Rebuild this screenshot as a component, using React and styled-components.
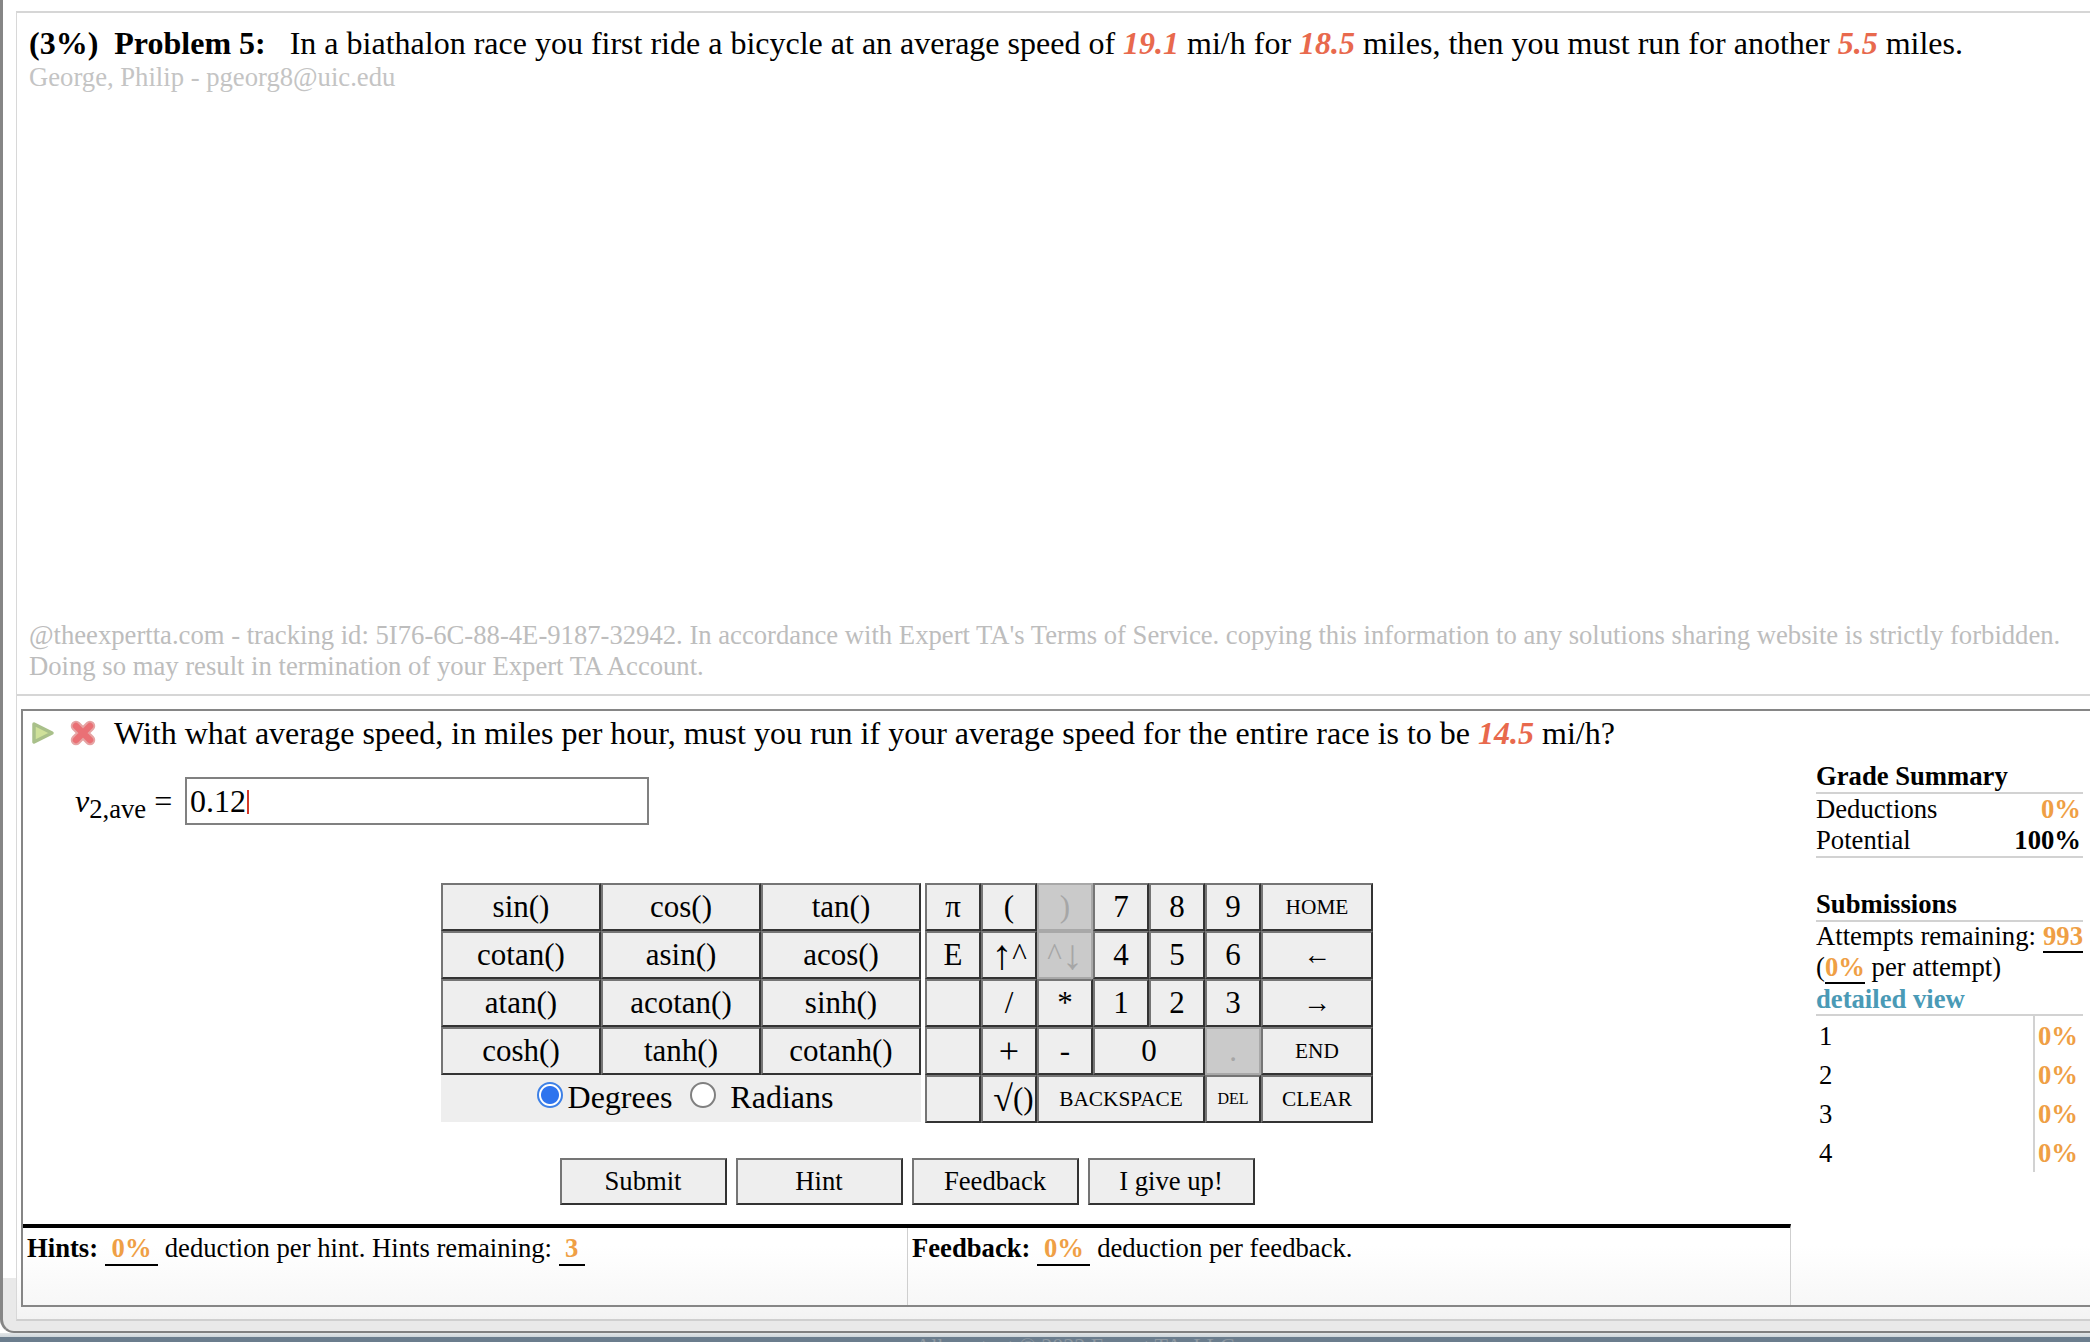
import React from "react";
import styled, { createGlobalStyle } from "styled-components";

const Global = createGlobalStyle`
  html, body { margin: 0; padding: 0; background: #fff; }
  body { font-family: "Liberation Serif", "Times New Roman", serif; color: #000; }
`;

const Page = styled.div`
  width: 2090px;
  height: 1342px;
  overflow: hidden;
  display: flex;
  flex-direction: column;
`;

const Win = styled.div`
  flex: none;
  height: 1333px;
  box-sizing: border-box;
  border-left: 3px solid #868686;
  border-bottom: 2px solid #808080;
  border-bottom-left-radius: 14px;
  padding: 11px 0 10px 13px;
  background: linear-gradient(#fff 96%, #e9e9e9 96%);
  display: flex;
`;

const Frame = styled.div`
  flex: 1;
  min-width: 0;
  box-sizing: border-box;
  border-top: 2px solid #d6d6d6;
  border-left: 1px solid #d8d8d8;
  border-bottom: 2px solid #cfcfcf;
  display: flex;
  flex-direction: column;
  background: linear-gradient(#fff 96%, #f3f3f3);
`;

const Statement = styled.section`
  flex: none;
  height: 683px;
  box-sizing: border-box;
  padding: 12px 0 12px 12px;
  border-bottom: 2px solid #d6d6d6;
  display: flex;
  flex-direction: column;
`;

const Lead = styled.p`
  margin: 0 0 1px;
  font-size: 32px;
  line-height: 36px;
  white-space: nowrap;
`;

const Var = styled.b`
  font-style: italic;
  color: #e8694d;
`;

const Owner = styled.div`
  font-size: 26.67px;
  line-height: 30px;
  color: #c4c4c4;
`;

const Legal = styled.div`
  margin-top: auto;
  font-size: 26.67px;
  line-height: 31px;
  color: #bdbdbd;
  white-space: nowrap;
`;

const Question = styled.section`
  flex: none;
  margin: 13px 0 0 4px;
  height: 598px;
  box-sizing: border-box;
  border-top: 2px solid #868686;
  border-left: 2px solid #868686;
  border-bottom: 2px solid #868686;
  background: linear-gradient(#fff 90%, #f7f7f7);
  display: flex;
`;

const Main = styled.div`
  width: 1768px;
  flex: none;
  display: flex;
  flex-direction: column;
`;

const Prompt = styled.div`
  height: 44px;
  padding-left: 8px;
  display: flex;
  align-items: center;
  font-size: 32px;
  white-space: nowrap;
`;

const IconSlot = styled.span`
  display: inline-flex;
  margin-right: ${(p) => p.$gap}px;
`;

const AnswerRow = styled.div`
  margin: 22px 0 0 52px;
  height: 48px;
  display: flex;
  align-items: center;
`;

const AnswerLabel = styled.div`
  width: 110px;
  flex: none;
  font-size: 32px;
  white-space: nowrap;
  em { font-size: 32px; }
  sub { font-size: 26.67px; line-height: 0; vertical-align: -6px; }
`;

const AnswerBox = styled.div`
  width: 464px;
  height: 48px;
  box-sizing: border-box;
  border: 2px solid #808080;
  padding-left: 3px;
  display: flex;
  align-items: center;
  font-size: 32px;
`;

const Caret = styled.span`
  display: inline-block;
  width: 2px;
  height: 24px;
  background: #d43a2a;
  margin-left: 1px;
  margin-top: 2px;
`;

const Calculator = styled.div`
  margin-top: 58px;
  display: flex;
  justify-content: center;
  gap: 4px;
`;

const FnColumn = styled.div`
  width: 480px;
  display: flex;
  flex-direction: column;
`;

const FnGrid = styled.div`
  display: grid;
  grid-template-columns: repeat(3, 160px);
  grid-auto-rows: 48px;
`;

const KeyGrid = styled.div`
  display: grid;
  grid-template-columns: repeat(6, 56px) 112px;
  grid-auto-rows: 48px;
`;

const Key = styled.div`
  box-sizing: border-box;
  grid-column: span ${(p) => p.$span || 1};
  border: 2px solid;
  border-color: ${(p) => (p.$off ? "#a8a8a8" : "#757575 #333 #333 #757575")};
  background: ${(p) => (p.$off ? "#cacaca" : "#eeeeee")};
  color: ${(p) => (p.$off ? "#a6a6a6" : "#000")};
  font-size: ${(p) => p.$size || 31}px;
  padding-left: ${(p) => p.$shift || 0}px;
  display: flex;
  align-items: center;
  justify-content: center;
  white-space: nowrap;
`;

const BigGlyph = styled.span`
  font-size: ${(p) => p.$size}px;
  line-height: 0;
`;

const AngleRow = styled.div`
  height: 47px;
  box-sizing: border-box;
  padding: 0 0 3px 8px;
  background: #eeeeee;
  display: flex;
  align-items: center;
  justify-content: center;
  font-size: 32px;
`;

const Radio = styled.input`
  appearance: none;
  flex: none;
  width: 26px;
  height: 26px;
  margin: 0 ${(p) => p.$after}px 5px ${(p) => p.$before}px;
  box-sizing: border-box;
  border-radius: 50%;
  border: 2px solid ${(p) => (p.$on ? "#3d80e6" : "#808080")};
  background: ${(p) =>
    p.$on ? "radial-gradient(circle, #2f74ee 0 8.5px, #fff 9.5px)" : "#fff"};
`;

const Actions = styled.div`
  margin-top: 35px;
  display: flex;
  justify-content: center;
  gap: 9px;
`;

const Action = styled.div`
  width: 167px;
  height: 47px;
  box-sizing: border-box;
  border: 2px solid;
  border-color: #757575 #333 #333 #757575;
  background: #eeeeee;
  font-size: 26.67px;
  display: flex;
  align-items: center;
  justify-content: center;
`;

const HelpRow = styled.div`
  margin-top: 19px;
  flex: 1;
  border-top: 4px solid #000;
  border-right: 1px solid #cfcfcf;
  display: grid;
  grid-template-columns: 884px 1fr;
`;

const HelpCell = styled.div`
  padding: 4px 0 0 ${(p) => p.$pad}px;
  font-size: 26.67px;
  line-height: 32px;
  white-space: nowrap;
  & + & { border-left: 1px solid #cfcfcf; }
  b { margin-right: 7px; }
`;

const Blank = styled.span`
  display: inline-block;
  min-width: ${(p) => p.$w}px;
  box-sizing: border-box;
  text-align: ${(p) => p.$align || "center"};
  font-weight: 700;
  color: #ef9f45;
  border-bottom: 2px solid #000;
  line-height: ${(p) => p.$lh || 32}px;
`;

const Side = styled.aside`
  margin: 50px 7px 0 25px;
  flex: 1;
  font-size: 26.67px;
  line-height: 31px;
`;

const SideTitle = styled.div`
  font-weight: 700;
  border-bottom: 2px solid #d2d2d2;
  line-height: 31px;
  margin-top: ${(p) => p.$top || 0}px;
`;

const SideRow = styled.div`
  display: flex;
  justify-content: space-between;
  padding-right: 2px;
  b { color: ${(p) => (p.$accent ? "#ef9f45" : "#000")}; }
`;

const AttemptsLine = styled.div`
  display: flex;
  justify-content: space-between;
  line-height: 29px;
  white-space: nowrap;
`;

const PerAttempt = styled.div`
  line-height: 29px;
  white-space: nowrap;
`;

const Rule = styled.div`
  border-bottom: 2px solid #d2d2d2;
`;

const Detail = styled.div`
  font-weight: 700;
  color: #4a9ab6;
  line-height: 30px;
  border-bottom: 2px solid #d2d2d2;
`;

const AttemptRow = styled.div`
  display: grid;
  grid-template-columns: 217px 1fr;
  height: 39px;
  align-items: center;
`;

const AttemptNo = styled.span`
  padding: 2px 0 0 3px;
  box-sizing: border-box;
  height: 100%;
  display: flex;
  align-items: center;
`;

const AttemptPct = styled.b`
  color: #ef9f45;
  box-sizing: border-box;
  height: 100%;
  display: flex;
  align-items: center;
  padding: 2px 0 0 3px;
  border-left: 2px solid #d2d2d2;
`;

const StatusBar = styled.div`
  flex: 1;
  overflow: hidden;
  background: linear-gradient(#e3e6e8 0, #cdd4d9 4px, #6b7d8d 4px);
  text-align: center;
  font-size: 22px;
  line-height: 26px;
  color: #8f9aa3;
  padding-left: 60px;
`;

const PlayIcon = () => (
  <svg width="24" height="24" viewBox="0 0 24 24">
    <path d="M3 3 L21 12 L3 21 Z" fill="#cfe19a" stroke="#a9c08a" strokeWidth="3.5" strokeLinejoin="round" />
  </svg>
);

const CrossIcon = () => (
  <svg width="28" height="28" viewBox="0 0 28 28">
    <path d="M7 7 L21 21 M21 7 L7 21" stroke="#e6a4a4" strokeWidth="10.5" strokeLinecap="round" fill="none" />
    <path d="M7 7 L21 21 M21 7 L7 21" stroke="#ea7075" strokeWidth="6.5" strokeLinecap="round" fill="none" />
  </svg>
);

const fnKeys = [
  "sin()", "cos()", "tan()",
  "cotan()", "asin()", "acos()",
  "atan()", "acotan()", "sinh()",
  "cosh()", "tanh()", "cotanh()",
];

const padKeys = [
  { t: "π" }, { t: "(" }, { t: ")", off: true }, { t: "7" }, { t: "8" }, { t: "9" }, { t: "HOME", size: 21.33 },
  { t: "E" }, { t: <><BigGlyph $size={42}>↑</BigGlyph>^</> }, { t: <>^<BigGlyph $size={42}>↓</BigGlyph></>, off: true }, { t: "4" }, { t: "5" }, { t: "6" }, { t: "←", size: 28 },
  { t: "" }, { t: "/" }, { t: "*" }, { t: "1" }, { t: "2" }, { t: "3" }, { t: "→", size: 28 },
  { t: "" }, { t: "+", size: 36 }, { t: "-" }, { t: "0", span: 2 }, { t: ".", off: true }, { t: "END", size: 21.33 },
  { t: "" }, { t: <><BigGlyph $size={36}>√</BigGlyph>()</>, shift: 9 }, { t: "BACKSPACE", span: 3, size: 21.33 }, { t: "DEL", size: 16 }, { t: "CLEAR", size: 21.33 },
];

export default function App() {
  return (
    <Page>
      <Global />
      <Win>
        <Frame>
          <Statement>
            <Lead>
              <b>(3%)&nbsp; Problem 5:</b>&nbsp;&nbsp; In a biathalon race you first ride a bicycle at an average speed of{" "}
              <Var>19.1</Var> mi/h for <Var>18.5</Var> miles, then you must run for another <Var>5.5</Var> miles.
            </Lead>
            <Owner>George, Philip - pgeorg8@uic.edu</Owner>
            <Legal>
              @theexpertta.com - tracking id: 5I76-6C-88-4E-9187-32942. In accordance with Expert TA's Terms of Service. copying this information to any solutions sharing website is strictly forbidden.
              <br />
              Doing so may result in termination of your Expert TA Account.
            </Legal>
          </Statement>
          <Question>
            <Main>
              <Prompt>
                <IconSlot $gap={14}><PlayIcon /></IconSlot>
                <IconSlot $gap={17}><CrossIcon /></IconSlot>
                With what average speed, in miles per hour, must you run if your average speed for the entire race is to be&nbsp;
                <Var>14.5</Var>&nbsp;mi/h?
              </Prompt>
              <AnswerRow>
                <AnswerLabel>
                  <em>v</em><sub>2,ave</sub> =
                </AnswerLabel>
                <AnswerBox>0.12<Caret /></AnswerBox>
              </AnswerRow>
              <Calculator>
                <FnColumn>
                  <FnGrid>
                    {fnKeys.map((k) => <Key key={k}>{k}</Key>)}
                  </FnGrid>
                  <AngleRow>
                    <Radio type="radio" name="angle" $on $before={0} $after={5} defaultChecked />
                    Degrees
                    <Radio type="radio" name="angle" $before={18} $after={14} />
                    Radians
                  </AngleRow>
                </FnColumn>
                <KeyGrid>
                  {padKeys.map((k, i) => (
                    <Key key={i} $span={k.span} $size={k.size} $off={k.off} $shift={k.shift}>{k.t}</Key>
                  ))}
                </KeyGrid>
              </Calculator>
              <Actions>
                <Action>Submit</Action>
                <Action>Hint</Action>
                <Action>Feedback</Action>
                <Action>I give up!</Action>
              </Actions>
              <HelpRow>
                <HelpCell $pad={4}>
                  <b>Hints:</b><Blank $w={53}>0%</Blank>&nbsp;deduction per hint. Hints remaining:&nbsp;<Blank $w={26}>3</Blank>
                </HelpCell>
                <HelpCell $pad={4}>
                  <b>Feedback:</b><Blank $w={53}>0%</Blank>&nbsp;deduction per feedback.
                </HelpCell>
              </HelpRow>
            </Main>
            <Side>
              <SideTitle>Grade Summary</SideTitle>
              <SideRow $accent><span>Deductions</span><b>0%</b></SideRow>
              <SideRow><span>Potential</span><b>100%</b></SideRow>
              <Rule />
              <SideTitle $top={31}>Submissions</SideTitle>
              <AttemptsLine>
                <span>Attempts remaining:</span>
                <Blank $w={40} $lh={29}>993</Blank>
              </AttemptsLine>
              <PerAttempt>(<Blank $w={40} $lh={29} $align="left">0%</Blank> per attempt)</PerAttempt>
              <Detail>detailed view</Detail>
              {[1, 2, 3, 4].map((n) => (
                <AttemptRow key={n}>
                  <AttemptNo>{n}</AttemptNo>
                  <AttemptPct>0%</AttemptPct>
                </AttemptRow>
              ))}
            </Side>
          </Question>
        </Frame>
      </Win>
      <StatusBar>All content © 2022 Expert TA, LLC</StatusBar>
    </Page>
  );
}
